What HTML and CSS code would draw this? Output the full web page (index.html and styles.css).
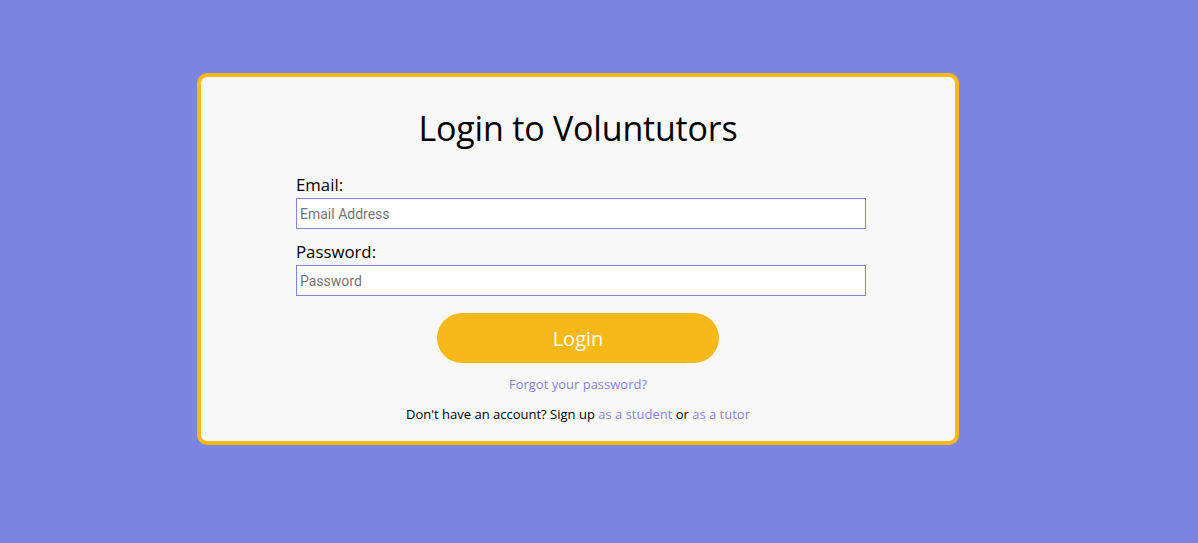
FILE: index.html
```html
<!DOCTYPE html>
<html lang="en">
<head>
<meta charset="utf-8">
<title>Login to Voluntutors</title>
<link rel="stylesheet" href="styles.css">
</head>
<body>
<main class="page">
  <section class="card">
    <h1 class="title">Login to Voluntutors</h1>
    <form class="form">
      <label class="label" for="email">Email:</label>
      <input class="input" id="email" type="text" placeholder="Email Address">
      <label class="label label-next" for="password">Password:</label>
      <input class="input" id="password" type="password" placeholder="Password">
      <button class="btn" type="button">Login</button>
    </form>
    <a class="link forgot" href="#">Forgot your password?</a>
    <p class="signup">Don't have an account? Sign up <a class="link" href="#">as a student</a> or <a class="link" href="#">as a tutor</a></p>
  </section>
</main>
</body>
</html>
```

FILE: styles.css
```css
html, body {
  margin: 0;
  padding: 0;
}
body {
  background: #7c86e2;
  font-family: "Open Sans", "Liberation Sans", sans-serif;
  color: #000;
}
.page {
  display: flex;
  justify-content: flex-start;
  padding: 73px 0 0 197px;
  height: 543px;
  box-sizing: border-box;
}
.card {
  width: 762px;
  height: 372px;
  box-sizing: border-box;
  border: 4px solid #f7b91a;
  border-radius: 10px;
  background: #f8f8f8;
  display: flex;
  flex-direction: column;
  align-items: center;
  padding-top: 31px;
}
.title {
  margin: 0;
  font-size: 34px;
  font-weight: 500;
  line-height: 40px;
  letter-spacing: -0.2px;
}
.form {
  display: flex;
  flex-direction: column;
  width: 570px;
  margin-top: 25px;
  margin-left: 6px;
}
.label {
  font-size: 16.8px;
  line-height: 24px;
  margin-bottom: 1px;
}
.label-next {
  margin-top: 11px;
}
.input {
  height: 31px;
  box-sizing: border-box;
  border: 1px solid #7c86e2;
  background: #fff;
  padding: 0 3px;
  font-family: Roboto, "Liberation Sans", sans-serif;
  font-size: 14px;
  outline: none;
}
.input::placeholder {
  color: #757575;
}
.btn {
  align-self: center;
  margin-top: 17px;
  margin-left: -6px;
  width: 282px;
  height: 50px;
  border: none;
  border-radius: 25px;
  background: #f7b91a;
  color: #fff;
  font-family: "Open Sans", "Liberation Sans", sans-serif;
  font-size: 20px;
}
.link {
  color: #8a7fe4;
  text-decoration: none;
}
.forgot {
  margin-top: 11px;
  font-size: 13px;
  line-height: 20px;
}
.signup {
  margin: 10px 0 0;
  font-size: 13px;
  line-height: 20px;
}
```
